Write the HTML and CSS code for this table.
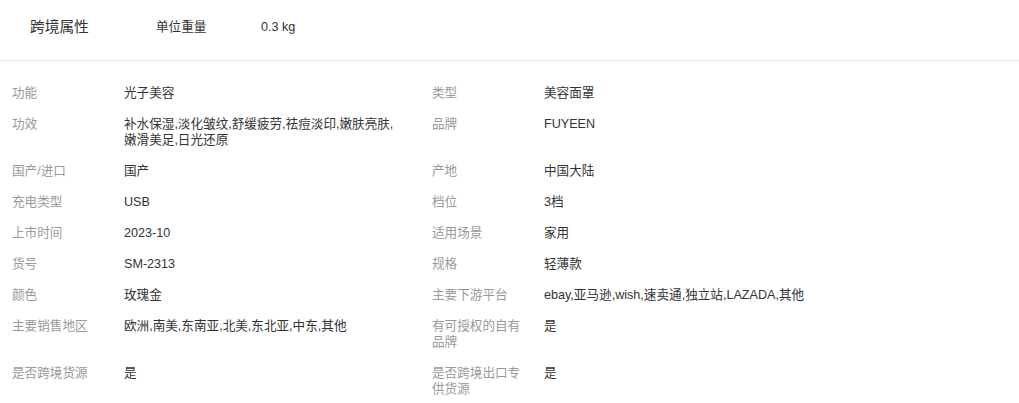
FILE: index.html
```html
<!DOCTYPE html>
<html lang="zh-CN">
<head>
    <meta charset="UTF-8">
    <title>商品属性</title>
    <link rel="stylesheet" href="styles.css">
</head>
<body>
    <div class="cross-border">
        <span class="section-title">跨境属性</span>
        <span class="cb-label">单位重量</span>
        <span class="cb-value">0.3 kg</span>
    </div>

    <div class="attr-grid">
        <div class="attr-label">功能</div>
        <div class="attr-value">光子美容</div>
        <div class="attr-label">类型</div>
        <div class="attr-value">美容面罩</div>

        <div class="attr-label">功效</div>
        <div class="attr-value">补水保湿,淡化皱纹,舒缓疲劳,祛痘淡印,嫩肤亮肤,嫩滑美足,日光还原</div>
        <div class="attr-label">品牌</div>
        <div class="attr-value">FUYEEN</div>

        <div class="attr-label">国产/进口</div>
        <div class="attr-value">国产</div>
        <div class="attr-label">产地</div>
        <div class="attr-value">中国大陆</div>

        <div class="attr-label">充电类型</div>
        <div class="attr-value">USB</div>
        <div class="attr-label">档位</div>
        <div class="attr-value">3档</div>

        <div class="attr-label">上市时间</div>
        <div class="attr-value">2023-10</div>
        <div class="attr-label">适用场景</div>
        <div class="attr-value">家用</div>

        <div class="attr-label">货号</div>
        <div class="attr-value">SM-2313</div>
        <div class="attr-label">规格</div>
        <div class="attr-value">轻薄款</div>

        <div class="attr-label">颜色</div>
        <div class="attr-value">玫瑰金</div>
        <div class="attr-label">主要下游平台</div>
        <div class="attr-value">ebay,亚马逊,wish,速卖通,独立站,LAZADA,其他</div>

        <div class="attr-label">主要销售地区</div>
        <div class="attr-value">欧洲,南美,东南亚,北美,东北亚,中东,其他</div>
        <div class="attr-label">有可授权的自有品牌</div>
        <div class="attr-value">是</div>

        <div class="attr-label">是否跨境货源</div>
        <div class="attr-value">是</div>
        <div class="attr-label">是否跨境出口专供货源</div>
        <div class="attr-value">是</div>
    </div>
</body>
</html>
```

FILE: styles.css
```css
body {
    margin: 0;
    background-color: #fff;
    font-family: "Liberation Sans", "Noto Sans CJK SC", sans-serif;
    font-size: 12.6px;
    color: #333;
}
.cross-border {
    display: flex;
    align-items: center;
    height: 20px;
    padding: 17px 0 23px 30px;
    border-bottom: 1px solid #e6e6e6;
    line-height: 20px;
}
.section-title {
    width: 126px;
    font-size: 14.7px;
    color: #333;
}
.cb-label {
    width: 105px;
}
.attr-grid {
    display: grid;
    grid-template-columns: 112px 308px 112px auto;
    row-gap: 15px;
    padding: 24px 0 0 12px;
    line-height: 16px;
}
.attr-label {
    padding-right: 16px;
    color: #999;
}
.attr-value {
    padding-right: 33px;
    color: #333;
}
```
